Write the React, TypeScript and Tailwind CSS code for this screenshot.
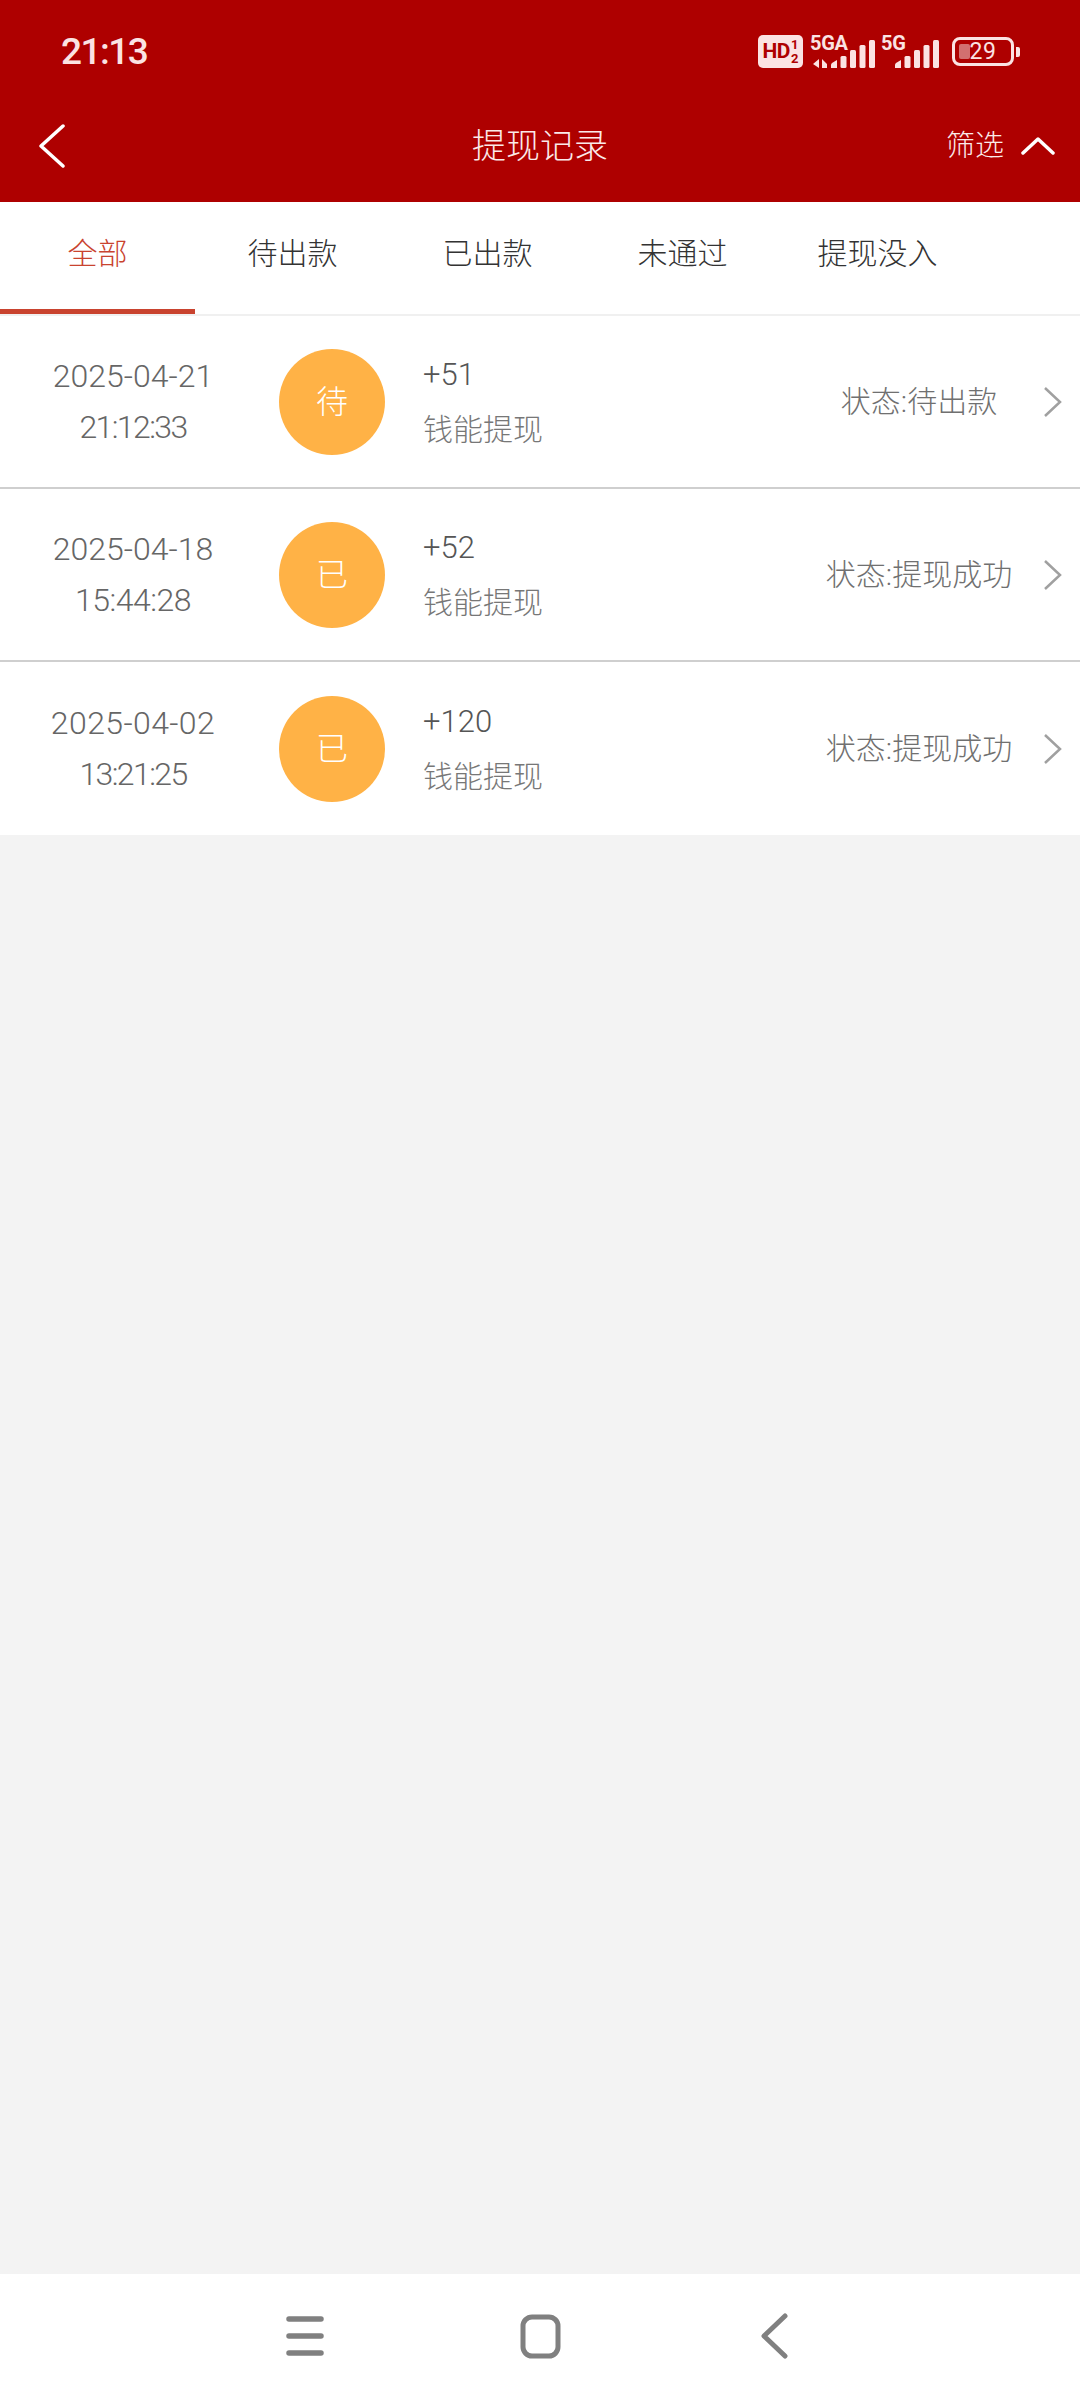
const font = { fontFamily: '"Roboto", "Noto Sans CJK SC", sans-serif' };

function Bars({ className }: { className?: string }) {
  return (
    <svg width="44" height="28" viewBox="0 0 44 28" className={className} fill="#fbe3e3">
      <path d="M0 28v-3q0-1 1-2l5-3v8z" />
      <rect x="9.5" y="16" width="6" height="12" rx="1.5" />
      <rect x="19" y="10" width="6" height="18" rx="1.5" />
      <rect x="28.5" y="5" width="6" height="23" rx="1.5" />
      <rect x="38" y="0" width="6" height="28" rx="1.5" />
    </svg>
  );
}

function StatusIcons() {
  return (
    <div className="flex items-center text-[#fbe3e3]" style={{ fontFamily: '"Roboto", sans-serif' }}>
      <div className="flex h-[33px] w-[45px] items-center justify-center rounded-[5px] bg-[#fbe3e3] font-bold text-[#ae0000]">
        <span className="text-[21px] leading-none tracking-[-0.5px]">HD</span>
        <span className="ml-[1px] flex flex-col items-center text-[13px] font-bold leading-[14px]">
          <span>1</span>
          <span>2</span>
        </span>
      </div>
      <div className="relative ml-[7px] h-[33px] w-[65px]">
        <span className="absolute left-0 top-0 text-[20px] font-bold leading-[17px] tracking-[-0.3px]">5GA</span>
        <svg width="16" height="9" viewBox="0 0 16 9" className="absolute bottom-0 left-[3px]" fill="#fbe3e3">
          <path d="M6 0v9L0 5zM9 0l5 5v4H9z" />
        </svg>
        <Bars className="absolute bottom-0 right-0" />
      </div>
      <div className="relative ml-[6px] h-[33px] w-[58px]">
        <span className="absolute left-0 top-0 text-[20px] font-bold leading-[17px] tracking-[-0.3px]">5G</span>
        <Bars className="absolute bottom-0 right-0" />
      </div>
      <div className="relative ml-[13px] flex h-[29px] w-[62px] items-center justify-center rounded-[8px] border-[3px] border-[#fbe3e3]">
        <div className="absolute bottom-[4px] left-[4px] top-[4px] w-[11px] rounded-[2px] bg-[#d27070]" />
        <span className="relative text-[23px] font-normal leading-none tracking-[0.5px]">29</span>
      </div>
      <div className="ml-[2px] h-[10px] w-[4px] rounded-r-[2px] bg-[#fbe3e3]" />
    </div>
  );
}

const tabs = ['全部', '待出款', '已出款', '未通过', '提现没入'];

const rows = [
  { date: '2025-04-21', dateClass: '', time: '21:12:33', timeClass: 'tracking-[-1.6px]', badge: '待', amount: '+51', status: '状态:待出款' },
  { date: '2025-04-18', dateClass: '', time: '15:44:28', timeClass: 'tracking-[-0.5px]', badge: '已', amount: '+52', status: '状态:提现成功' },
  { date: '2025-04-02', dateClass: 'tracking-[0.4px]', time: '13:21:25', timeClass: 'tracking-[-1.6px]', badge: '已', amount: '+120', status: '状态:提现成功' },
];

export default function App() {
  return (
    <div className="flex h-[2400px] w-[1080px] flex-col bg-[#f3f3f3]" style={font}>
      <header className="h-[202px] shrink-0 bg-[#ae0000]">
        <div className="flex h-[101px] items-center justify-between pl-[61px] pr-[60px] pt-[2px]">
          <span className="text-[37px] font-medium leading-none tracking-[-1.5px] text-[#fbe3e3]">21:13</span>
          <StatusIcons />
        </div>
        <div className="relative flex h-[90px] items-center justify-center">
          <svg width="26" height="44" viewBox="0 0 26 44" fill="none" stroke="#fff" strokeWidth="3.5" strokeLinecap="round" strokeLinejoin="round" className="absolute left-[39px] top-[23px]">
            <path d="M24 2 2 22l22 20" />
          </svg>
          <span className="text-[34px] font-light leading-none text-[#fbeaea]">提现记录</span>
          <div className="absolute right-[25px] top-[30px] flex items-center gap-[17px]">
            <span className="relative top-[1px] text-[29px] font-light leading-none text-[#fbeaea]">筛选</span>
            <svg width="34" height="20" viewBox="0 0 34 20" fill="none" stroke="#fff" strokeWidth="3.5" strokeLinecap="round" strokeLinejoin="round">
              <path d="M2 17 17 3l15 14" />
            </svg>
          </div>
        </div>
      </header>

      <nav className="flex h-[114px] shrink-0 border-b-[2px] border-[#f0f0f0] bg-white">
        {tabs.map((t, i) => (
          <div
            key={t}
            className={
              i === 0
                ? 'mb-[-2px] flex h-[112px] w-[195px] items-center justify-center border-b-[5px] border-[#c9432f] pb-[3px] text-[30px] font-light leading-none text-[#c9432f]'
                : 'flex h-[112px] w-[195px] items-center justify-center pb-[8px] text-[30px] font-light leading-none text-[#333333]'
            }
          >
            {t}
          </div>
        ))}
      </nav>

      <div className="flex flex-col">
        {rows.map((r, i) => (
          <div
            key={r.date}
            className={
              i < rows.length - 1
                ? 'flex h-[173px] items-center border-b-[2px] border-[#cfcfcf] bg-white'
                : 'flex h-[173px] items-center bg-white'
            }
          >
            <div className="flex w-[266px] shrink-0 flex-col items-center text-[32px] font-light leading-[51px] text-[#666666]">
              <span className={r.dateClass}>{r.date}</span>
              <span className={r.timeClass}>{r.time}</span>
            </div>
            <div className="ml-[13px] flex h-[106px] w-[106px] shrink-0 items-center justify-center rounded-full bg-[#ffb246] text-[32px] font-light leading-none text-white">
              {r.badge}
            </div>
            <div className="ml-[38px] flex w-[376px] shrink-0 flex-col">
              <span className="text-[31px] font-light leading-[55px] text-[#555555]">{r.amount}</span>
              <span className="text-[30px] font-light leading-[55px] text-[#777777]">钱能提现</span>
            </div>
            <div className="w-[240px] shrink-0 text-center text-[30px] font-light leading-none text-[#707070]">
              {r.status}
            </div>
            <svg width="20" height="32" viewBox="0 0 20 32" fill="none" stroke="#a0a0a0" strokeWidth="2.5" className="ml-[4px] shrink-0">
              <path d="M2 2l15 14L2 30" />
            </svg>
          </div>
        ))}
      </div>

      <div className="flex-1" />

      <footer className="flex h-[126px] shrink-0 items-center bg-white pb-[3px] pl-[285px]">
        <svg width="40" height="40" viewBox="0 0 40 40" fill="none" stroke="#808080" strokeWidth="5.5" strokeLinecap="round">
          <path d="M4 3h32M4 20h32M4 37h32" />
        </svg>
        <svg width="44" height="48" viewBox="0 0 44 48" fill="none" stroke="#808080" strokeWidth="5" className="ml-[194px]">
          <rect x="4" y="5" width="35" height="39" rx="9" />
        </svg>
        <svg width="28" height="46" viewBox="0 0 28 46" fill="none" stroke="#808080" strokeWidth="5" strokeLinecap="round" strokeLinejoin="round" className="ml-[197px]">
          <path d="M25 3 4 23l21 20" />
        </svg>
      </footer>
    </div>
  );
}
